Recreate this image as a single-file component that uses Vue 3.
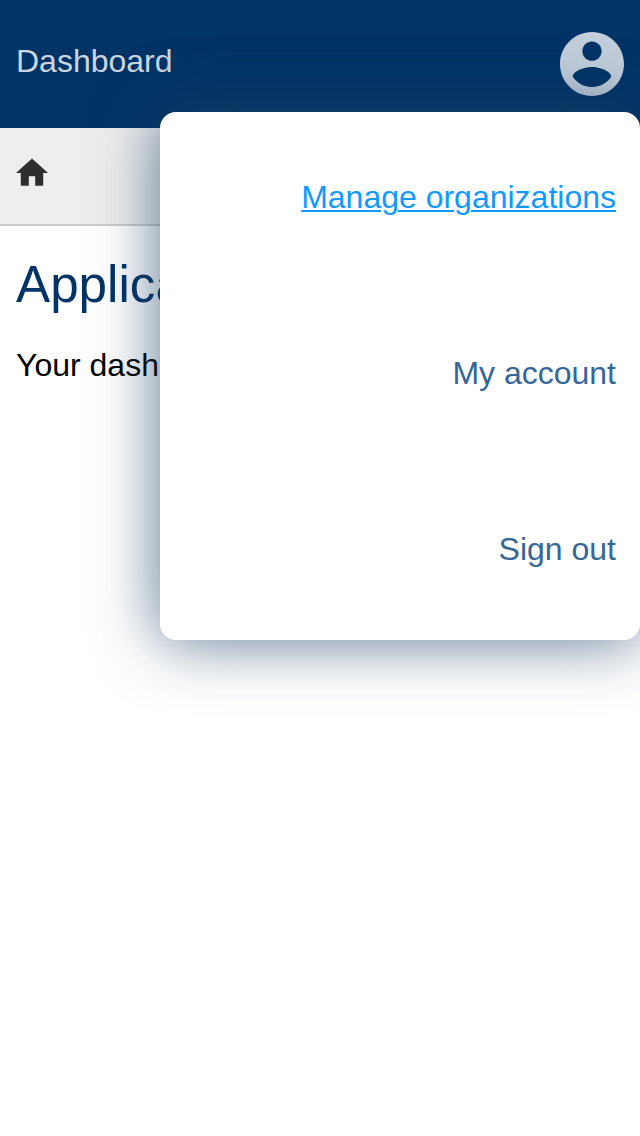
<script setup>
const items = [
  { label: 'Manage organizations', active: true },
  { label: 'My account', active: false },
  { label: 'Sign out', active: false },
]
</script>

<template>
  <div class="page">
    <header class="bar">
      <span class="title">Dashboard</span>
      <svg class="avatar" viewBox="2 2 20 20">
        <path d="M12 2C6.48 2 2 6.48 2 12s4.480 10 10 10 10-4.480 10-10S17.520 2 12 2zm0 3c1.660 0 3 1.340 3 3s-1.340 3-3 3-3-1.340-3-3 1.340-3 3-3zm0 14.200c-2.500 0-4.710-1.280-6-3.220.030-1.990 4-3.080 6-3.080 1.990 0 5.970 1.090 6 3.080-1.290 1.940-3.500 3.220-6 3.220z" />
      </svg>
    </header>
    <nav class="crumbs">
      <svg class="home" viewBox="2 2 20 20"><path d="M10 20v-6h4v6h5v-8h3L12 3 2 12h3v8z" /></svg>
    </nav>
    <main class="content">
      <h1>Applications</h1>
      <p>Your dashboard</p>
    </main>
    <div class="menu">
      <a v-for="item in items" :key="item.label" class="item" :class="{ active: item.active }">{{ item.label }}</a>
    </div>
  </div>
</template>

<style>
html, body { margin: 0; background: #fff; overflow: hidden; }
</style>

<style scoped>
.page {
  position: relative;
  height: 1136px;
  overflow: hidden;
  font-family: "Liberation Sans", Arial, sans-serif;
  font-size: 32px;
  color: #000;
}
.bar {
  box-sizing: border-box;
  height: 128px;
  padding: 32px 16px;
  display: flex;
  justify-content: space-between;
  background: #003366;
}
.title { line-height: 58px; color: #ccd6e0; }
.avatar { width: 64px; height: 64px; fill: #c2cedb; }
.crumbs {
  box-sizing: border-box;
  height: 98px;
  padding: 28.800px 16px;
  background: #eee;
  border-bottom: 2px solid #ccc;
}
.home { display: block; width: 32px; height: 32px; fill: #2e2e2e; }
.content { padding: 27px 16px 0; white-space: nowrap; }
h1 { margin: 0; font-size: 51.2px; font-weight: 400; line-height: 64px; color: #003366; }
p { margin: 24px 0 0; line-height: 48px; }
.menu {
  position: absolute;
  top: 112px;
  left: 160px;
  box-sizing: border-box;
  width: 480px;
  height: 528px;
  display: flex;
  flex-direction: column;
  border-radius: 16px;
  background: #fff;
  box-shadow: 0 0 64px rgba(32, 66, 100, 0.74);
}
.item {
  flex: 1;
  padding-right: 24px;
  line-height: 170px;
  text-align: right;
  color: #336699;
}
.active {
  color: #1199ff;
  text-decoration: underline;
  text-decoration-thickness: 2px;
  text-underline-offset: 2px;
}
</style>
